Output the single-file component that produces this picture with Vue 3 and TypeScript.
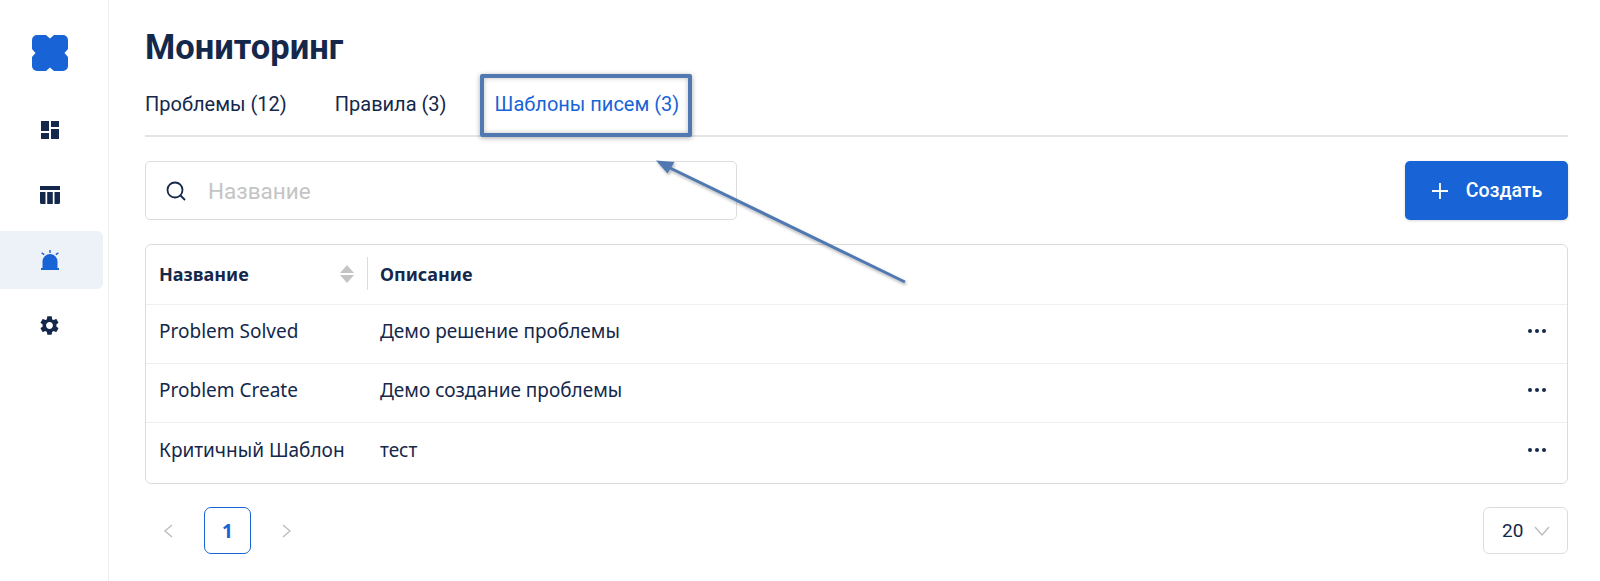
<template>
  <div class="page">
    <aside class="sidebar">
      <svg class="logo" viewBox="0 0 36 36" width="36" height="36">
        <path d="M5 0h9l4 3.500L22 0h9a5 5 0 0 1 5 5v9l-3.500 4 3.500 4v9a5 5 0 0 1-5 5h-9l-4-3.500-4 3.500H5a5 5 0 0 1-5-5v-9l3.500-4L0 14V5a5 5 0 0 1 5-5z" fill="#1864d6" />
      </svg>
      <nav class="nav">
        <a class="nav-item">
          <svg viewBox="0 0 18 18" width="18" height="18"><path d="M0 0h8v10H0zM10 0h8v6h-8zM0 12h8v6H0zM10 8h8v10h-8z" fill="#14284b" /></svg>
        </a>
        <a class="nav-item">
          <svg viewBox="0 0 20 18" width="20" height="18"><path d="M0 0h20v4H0zM0 6h5.500v12H1.500A1.500 1.500 0 0 1 0 16.500zM7.200 6h5.600v12H7.200zM14.500 6H20v10.500a1.500 1.500 0 0 1-1.500 1.500h-4z" fill="#14284b" /></svg>
        </a>
        <a class="nav-item active">
          <svg viewBox="0 0 20 20" width="20" height="20">
            <path d="M9.300 0h1.400v3H9.300zM1.200 3.500l.8-1.200 2.600 1.700-.8 1.200zM18.800 3.500L18 2.300 15.400 4l.8 1.200z" fill="#1864d6" />
            <path d="M2.500 18v-6.500a7.500 7.500 0 0 1 15 0V18zM1 18h18v2H1z" fill="#1864d6" />
          </svg>
        </a>
        <a class="nav-item">
          <svg viewBox="0 0 24 24" width="23" height="23"><path d="M19.140 12.940c.04-.3.06-.61.06-.94 0-.32-.02-.64-.07-.94l2.030-1.580c.18-.14.23-.41.12-.61l-1.920-3.320c-.12-.22-.37-.29-.59-.22l-2.390.96c-.5-.38-1.030-.7-1.620-.94L14.400 2.810c-.04-.24-.24-.41-.48-.41h-3.840c-.24 0-.43.17-.47.41L9.250 5.350c-.59.24-1.130.57-1.620.94l-2.390-.96c-.22-.08-.47 0-.59.22L2.740 8.870c-.12.21-.08.47.12.61l2.030 1.580c-.05.3-.09.63-.09.94s.02.64.07.94l-2.030 1.580c-.18.14-.23.41-.12.61l1.920 3.320c.12.22.37.29.59.22l2.390-.96c.5.38 1.030.7 1.620.94l.36 2.540c.05.24.24.41.48.41h3.840c.24 0 .44-.17.47-.41l.36-2.540c.59-.24 1.130-.56 1.620-.94l2.390.96c.22.08.47 0 .59-.22l1.920-3.320c.12-.22.07-.47-.12-.61l-2.010-1.580zM12 15.600c-1.980 0-3.600-1.620-3.600-3.600s1.620-3.600 3.600-3.600 3.600 1.620 3.600 3.600-1.620 3.600-3.600 3.600z" fill="#14284b" /></svg>
        </a>
      </nav>
    </aside>

    <main class="content">
      <h1 class="title">Мониторинг</h1>
      <div class="tabs">
        <a v-for="tab in tabs" :key="tab.label" class="tab" :class="{ selected: tab.selected }">{{ tab.label }}</a>
      </div>

      <div class="toolbar">
        <div class="search">
          <svg viewBox="0 0 22 22" width="22" height="22" fill="none" stroke="#14284b" stroke-width="1.800">
            <circle cx="10" cy="10" r="7.500" />
            <path d="M15.500 15.500l4.500 4.500" />
          </svg>
          <span class="placeholder">Название</span>
        </div>
        <button class="create">
          <svg viewBox="0 0 18 18" width="18" height="18" stroke="#fff" stroke-width="1.800"><path d="M9 1v16M1 9h16" /></svg>
          <span>Создать</span>
        </button>
      </div>

      <div class="table">
        <div class="row head">
          <div class="cell name">
            <span>Название</span>
            <span class="sort">
              <i class="up"></i>
              <i class="down"></i>
            </span>
          </div>
          <div class="cell">Описание</div>
        </div>
        <div v-for="row in rows" :key="row.name" class="row">
          <div class="cell name">{{ row.name }}</div>
          <div class="cell desc">{{ row.desc }}</div>
          <div class="dots"><i></i><i></i><i></i></div>
        </div>
      </div>

      <div class="footer">
        <div class="pager">
          <svg viewBox="0 0 12 16" width="12" height="16" fill="none" stroke="#bdbdbd" stroke-width="1.400"><path d="M10 2L3 8l7 6" /></svg>
          <span class="page-num">1</span>
          <svg viewBox="0 0 12 16" width="12" height="16" fill="none" stroke="#bdbdbd" stroke-width="1.400"><path d="M2 2l7 6-7 6" /></svg>
        </div>
        <div class="size">
          <span>20</span>
          <svg viewBox="0 0 16 10" width="16" height="10" fill="none" stroke="#bdbdbd" stroke-width="1.400"><path d="M1 1l7 8 7-8" /></svg>
        </div>
      </div>
    </main>

    <!-- пометка поверх скриншота -->
    <div class="mark-box"></div>
    <svg class="mark-arrow" viewBox="0 0 1600 581" width="1600" height="581">
      <defs>
        <filter id="sh" x="-10%" y="-10%" width="120%" height="120%">
          <feDropShadow dx="1" dy="2" stdDeviation="1.500" flood-color="#000" flood-opacity="0.3" />
        </filter>
      </defs>
      <g filter="url(#sh)">
        <path d="M905 282L668 167" stroke="#4f79b0" stroke-width="3" />
        <path d="M656 160.500l18.500 1.500-7 11.500z" fill="#4f79b0" />
      </g>
    </svg>
  </div>
</template>

<script setup lang="ts">
const tabs = [
  { label: "Проблемы (12)", selected: false },
  { label: "Правила (3)", selected: false },
  { label: "Шаблоны писем (3)", selected: true },
];

const rows = [
  { name: "Problem Solved", desc: "Демо решение проблемы" },
  { name: "Problem Create", desc: "Демо создание проблемы" },
  { name: "Критичный Шаблон", desc: "тест" },
];
</script>

<style>
html,
body {
  background: #fff;
  overflow: hidden;
}
</style>

<style scoped>
.page {
  position: relative;
  display: flex;
  width: 1600px;
  height: 581px;
  overflow: hidden;
  color: #14284b;
  font-family: "Noto Sans", "Liberation Sans", sans-serif;
}
.sidebar {
  width: 108px;
  flex-shrink: 0;
  border-right: 1px solid #eeeeee;
  box-sizing: content-box;
  padding-top: 35px;
}
.logo {
  display: block;
  margin-left: 32px;
}
.nav {
  margin-top: 30px;
  display: flex;
  flex-direction: column;
  gap: 7px;
}
.nav-item {
  width: 103px;
  height: 58px;
  padding-right: 4px;
  box-sizing: border-box;
  display: flex;
  align-items: center;
  justify-content: center;
  border-radius: 0 6px 6px 0;
}
.nav-item.active {
  background: #edf2f9;
}
.content {
  flex: 1;
  padding: 0 32px 0 36px;
}
.title {
  margin: 25px 0 0;
  font-family: Roboto, "Liberation Sans", sans-serif;
  font-size: 34.500px;
  line-height: 44px;
  font-weight: 700;
}
.tabs {
  display: flex;
  gap: 48px;
  height: 68px;
  padding-top: 22px;
  box-sizing: border-box;
  border-bottom: 2px solid #e4e4e4;
  font-family: Roboto, "Liberation Sans", sans-serif;
  font-size: 20px;
  line-height: 26px;
}
.tab.selected {
  color: #1864d6;
}
.toolbar {
  display: flex;
  justify-content: space-between;
  margin-top: 24px;
}
.search {
  width: 592px;
  height: 59px;
  box-sizing: border-box;
  border: 1px solid #dcdcdc;
  border-radius: 5px;
  display: flex;
  align-items: center;
  gap: 21px;
  padding-left: 19px;
}
.placeholder {
  color: #c4c4c4;
  font-size: 22.500px;
  font-family: Roboto, "Liberation Sans", sans-serif;
}
.create {
  width: 163px;
  height: 59px;
  border: none;
  border-radius: 5px;
  background: #1864d6;
  color: #fff;
  display: flex;
  align-items: center;
  justify-content: center;
  gap: 17px;
  font-family: Roboto, "Liberation Sans", sans-serif;
  font-size: 19.500px;
  font-weight: 500;
  box-shadow: 0 1px 3px rgba(0, 0, 0, 0.15);
}
.table {
  margin-top: 24px;
  border: 1px solid #dcdcdc;
  border-radius: 6px;
}
.row {
  position: relative;
  display: flex;
  align-items: center;
  height: 59px;
  box-sizing: border-box;
  padding-bottom: 6px;
  border-top: 1px solid #efefef;
  font-size: 19px;
}
.row:first-child {
  border-top: none;
}
.row:last-child {
  height: 61px;
}
.head {
  font-weight: 700;
  font-size: 18px;
  padding-bottom: 2px;
}
.cell {
  padding-left: 12px;
}
.name {
  width: 222px;
  padding-left: 13px;
  box-sizing: border-box;
  flex-shrink: 0;
}
.head .name {
  display: flex;
  align-items: center;
  justify-content: space-between;
  height: 33px;
  padding-right: 13px;
  border-right: 1px solid #dcdcdc;
}
.sort {
  display: flex;
  flex-direction: column;
  gap: 2px;
}
.sort i {
  width: 0;
  height: 0;
  border-left: 7px solid transparent;
  border-right: 7px solid transparent;
}
.sort .up {
  border-bottom: 8px solid #c4c4c4;
}
.sort .down {
  border-top: 8px solid #c4c4c4;
}
.dots {
  position: absolute;
  right: 21px;
  top: 50%;
  display: flex;
  gap: 3px;
  margin-top: -5px;
}
.dots i {
  width: 4px;
  height: 4px;
  border-radius: 50%;
  background: #14284b;
}
.footer {
  display: flex;
  justify-content: space-between;
  align-items: center;
  margin-top: 23px;
}
.pager {
  display: flex;
  align-items: center;
  gap: 30px;
  padding-left: 17px;
}
.page-num {
  width: 47px;
  height: 47px;
  box-sizing: border-box;
  border: 1.500px solid #1864d6;
  border-radius: 7px;
  color: #1864d6;
  font-weight: 700;
  font-size: 19px;
  display: flex;
  align-items: center;
  justify-content: center;
}
.size {
  width: 85px;
  height: 47px;
  box-sizing: border-box;
  border: 1px solid #dcdcdc;
  border-radius: 6px;
  display: flex;
  align-items: center;
  gap: 11px;
  padding-left: 18px;
  font-family: Roboto, "Liberation Sans", sans-serif;
  font-size: 19px;
}
.mark-box {
  position: absolute;
  left: 480px;
  top: 74px;
  width: 212px;
  height: 63px;
  box-sizing: border-box;
  border: 4px solid #4f79b0;
  border-radius: 2px;
  box-shadow: 0 1px 5px rgba(0, 0, 0, 0.35), inset 0 0 5px rgba(0, 0, 0, 0.25);
}
.mark-arrow {
  position: absolute;
  left: 0;
  top: 0;
  pointer-events: none;
}
</style>
